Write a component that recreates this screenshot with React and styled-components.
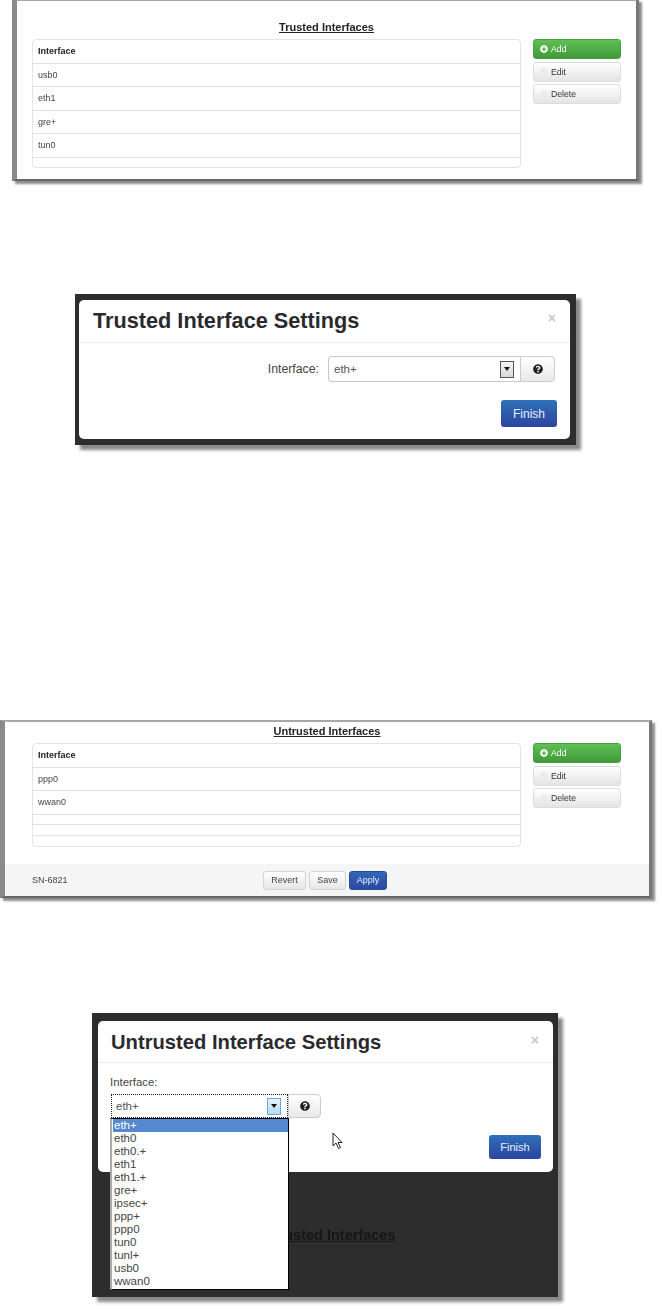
import React from "react";
import styled, { createGlobalStyle } from "styled-components";
import { FaPlusCircle, FaCheckCircle, FaMinusCircle, FaQuestionCircle } from "react-icons/fa";

const GlobalStyle = createGlobalStyle`
  html, body { margin: 0; padding: 0; background: #fff; }
  body { font-family: "Liberation Sans", Arial, sans-serif; color: #333; }
`;

const Page = styled.div`
  width: 662px;
  height: 1309px;
  overflow: hidden;
  display: flex;
  flex-direction: column;
  filter: blur(0.3px);
`;

const Window = styled.section`
  box-sizing: border-box;
  display: flex;
  flex-direction: column;
  background: #fff;
  margin: ${(p) => p.$margin};
  width: ${(p) => p.$width}px;
  height: ${(p) => p.$height}px;
  padding-top: ${(p) => p.$top}px;
  border-top: 2px solid #a8a8a8;
  border-left: ${(p) => p.$left}px solid #8c8a88;
  border-right: 3px solid #77777a;
  border-bottom: 2px solid #666;
  box-shadow: 3px 3px 2px #8d8d8d;
`;

const SectionTitle = styled.h2`
  margin: 0;
  font-size: 11px;
  line-height: 14px;
  font-weight: 700;
  text-align: center;
  text-decoration: underline;
  color: ${(p) => p.$color || "#222"};
`;

const Body = styled.div`
  display: flex;
  align-items: flex-start;
  gap: 12px;
  margin: ${(p) => p.$gap}px 0 0 ${(p) => p.$inset}px;
`;

const Table = styled.div`
  box-sizing: border-box;
  width: 489px;
  border: 1px solid #e4e4e4;
  border-radius: 4px;
  display: flex;
  flex-direction: column;
`;

const Row = styled.div`
  box-sizing: border-box;
  height: ${(p) => p.$height || 23.5}px;
  padding-left: 5px;
  display: flex;
  align-items: center;
  font-size: 9px;
  font-weight: ${(p) => (p.$head ? 700 : 400)};
  color: ${(p) => (p.$head ? "#222" : "#444")};
  border-bottom: ${(p) => (p.$last ? "none" : "1px solid #e2e2e2")};
`;

const Actions = styled.div`
  display: flex;
  flex-direction: column;
  gap: 2.5px;
  width: 88px;
`;

const ActionButton = styled.div`
  box-sizing: border-box;
  height: 20px;
  padding-left: 6px;
  display: flex;
  align-items: center;
  gap: 3px;
  font-size: 8.7px;
  border-radius: 3px;
  color: ${(p) => (p.$primary ? "#fff" : "#333")};
  background: ${(p) =>
    p.$primary ? "linear-gradient(#5fc052, #419a3b)" : "linear-gradient(#fff, #e4e4e4)"};
  border: 1px solid ${(p) => (p.$primary ? "#4a9e43" : "#ddd")};
  svg {
    width: 8px;
    height: 8px;
    color: ${(p) => (p.$primary ? "#fff" : "#eaeaea")};
  }
`;

const Footer = styled.div`
  margin-top: auto;
  height: 32px;
  background: #f5f5f5;
  display: flex;
  align-items: center;
  padding-left: ${(p) => p.$inset}px;
`;

const Serial = styled.span`
  width: 231px;
  font-size: 9px;
  color: #444;
`;

const FooterButton = styled.div`
  box-sizing: border-box;
  height: 19px;
  width: ${(p) => p.$width}px;
  margin-right: 3px;
  display: flex;
  align-items: center;
  justify-content: center;
  font-size: 9px;
  border-radius: 3px;
  color: ${(p) => (p.$primary ? "#e8eefc" : "#444")};
  background: ${(p) =>
    p.$primary ? "linear-gradient(#2f66b5, #2b4aa2)" : "linear-gradient(#fff, #e6e6e6)"};
  border: 1px solid ${(p) => (p.$primary ? "#2a4a9a" : "#d4d4d4")};
`;

const Frame = styled.section`
  box-sizing: border-box;
  position: relative;
  margin: ${(p) => p.$margin};
  width: ${(p) => p.$width}px;
  height: ${(p) => p.$height}px;
  padding: ${(p) => p.$padding};
  background: #2d2d2d;
  box-shadow: 5px 5px 3px #8a8a8a;
`;

const Modal = styled.div`
  box-sizing: border-box;
  height: ${(p) => p.$height}px;
  background: #fff;
  border-radius: 5px;
  display: flex;
  flex-direction: column;
`;

const ModalHead = styled.div`
  box-sizing: border-box;
  height: ${(p) => p.$height}px;
  padding: ${(p) => p.$pushDown || 0}px 14px 0 ${(p) => p.$inset}px;
  display: flex;
  align-items: center;
  justify-content: space-between;
  border-bottom: 1px solid #eee;
`;

const ModalTitle = styled.h1`
  margin: 0;
  font-size: ${(p) => p.$size}px;
  font-weight: 700;
  color: #2a2a2e;
`;

const Close = styled.span`
  font-size: 14px;
  font-weight: 700;
  color: #c8c8c8;
  margin-top: -6px;
`;

const FieldRow = styled.div`
  display: flex;
  align-items: center;
  justify-content: flex-end;
  margin: 13px 15px 0 0;
`;

const Label = styled.label`
  font-size: ${(p) => p.$size}px;
  color: #444;
  margin-right: ${(p) => p.$right || 0}px;
  margin-left: ${(p) => p.$left || 0}px;
  margin-top: ${(p) => p.$top || 0}px;
`;

const SelectBox = styled.div`
  box-sizing: border-box;
  width: ${(p) => p.$width}px;
  height: ${(p) => p.$height}px;
  padding: 0 6px 0 ${(p) => (p.$focus ? 4 : 5)}px;
  display: flex;
  align-items: center;
  justify-content: space-between;
  font-size: 11.5px;
  color: #555;
  background: #fff;
  border: 1px ${(p) => (p.$focus ? "dotted #222" : "solid #c8c8c8")};
  border-right: ${(p) => (p.$focus ? "1px dotted #222" : "none")};
  border-radius: ${(p) => (p.$focus ? "0" : "4px 0 0 4px")};
`;

const Arrow = styled.span`
  box-sizing: border-box;
  width: 14px;
  height: 17px;
  display: flex;
  align-items: center;
  justify-content: center;
  border: 1px solid ${(p) => (p.$hover ? "#6fa8d0" : "#555")};
  background: ${(p) => (p.$hover ? "linear-gradient(#e6f3fb, #b5dbf2)" : "linear-gradient(#f4f4f4, #d8d8d8)")};
  &::after {
    content: "";
    border: 3px solid transparent;
    border-top: 4px solid #111;
    border-bottom: none;
  }
`;

const HelpButton = styled.div`
  box-sizing: border-box;
  width: ${(p) => p.$width}px;
  height: ${(p) => p.$height}px;
  display: flex;
  align-items: center;
  justify-content: center;
  background: linear-gradient(#fff, #e8e8e8);
  border: 1px solid #ccc;
  border-radius: 0 4px 4px 0;
  svg {
    width: 10px;
    height: 10px;
    color: #222;
  }
`;

const FinishRow = styled.div`
  display: flex;
  justify-content: flex-end;
  margin: ${(p) => p.$top}px ${(p) => p.$right}px 0 0;
`;

const FinishButton = styled.div`
  box-sizing: border-box;
  width: ${(p) => p.$width}px;
  height: ${(p) => p.$height}px;
  display: flex;
  align-items: center;
  justify-content: center;
  font-size: ${(p) => p.$size}px;
  color: #e8eefc;
  border-radius: 3px;
  background: linear-gradient(#2f70b8, #2b45a0);
`;

const InlineField = styled.div`
  display: flex;
  margin: 6px 0 0 13px;
`;

const DropList = styled.ul`
  box-sizing: border-box;
  position: absolute;
  top: 105px;
  left: 18px;
  width: 179px;
  margin: 0;
  padding: 0 0 1px 2px;
  list-style: none;
  background: #fff;
  border: 1px solid #000;
  border-left: 2px solid #aaa;
  font-size: 11.5px;
  line-height: 13px;
  color: #444;
`;

const DropItem = styled.li`
  height: 13px;
  margin-left: ${(p) => (p.$selected ? "-1px" : "0")};
  padding-left: ${(p) => (p.$selected ? "1px" : "0")};
  background: ${(p) => (p.$selected ? "#5588cc" : "transparent")};
  color: ${(p) => (p.$selected ? "#fff" : "#444")};
`;

const Cursor = styled.svg`
  position: absolute;
  left: 240px;
  top: 119px;
`;

const BehindTitle = styled(SectionTitle)`
  position: absolute;
  top: 214px;
  left: 0;
  right: 0;
  font-size: 14.5px;
  line-height: 16px;
  color: #161616;
`;

const trusted = ["usb0", "eth1", "gre+", "tun0"];
const untrusted = ["ppp0", "wwan0"];
const options = ["eth+", "eth0", "eth0.+", "eth1", "eth1.+", "gre+", "ipsec+", "ppp+", "ppp0", "tun0", "tunl+", "usb0", "wwan0"];

function SideActions() {
  return (
    <Actions>
      <ActionButton $primary><FaPlusCircle /> Add</ActionButton>
      <ActionButton><FaCheckCircle /> Edit</ActionButton>
      <ActionButton><FaMinusCircle /> Delete</ActionButton>
    </Actions>
  );
}

export default function App() {
  return (
    <Page>
      <GlobalStyle />

      <Window $margin="-1px 0 0 12px" $width={627} $height={182} $left={5} $top={19}>
        <SectionTitle>Trusted Interfaces</SectionTitle>
        <Body $gap={5} $inset={15}>
          <Table>
            <Row $head>Interface</Row>
            {trusted.map((name) => <Row key={name}>{name}</Row>)}
            <Row $last $height={9} />
          </Table>
          <SideActions />
        </Body>
      </Window>

      <Frame $margin="113px 0 0 75px" $width={501} $height={151} $padding="6px 6px 6px 4px">
        <Modal $height={139}>
          <ModalHead $height={43} $inset={14}>
            <ModalTitle $size={21.7}>Trusted Interface Settings</ModalTitle>
            <Close>×</Close>
          </ModalHead>
          <FieldRow>
            <Label $size={12.3} $right={9}>Interface:</Label>
            <SelectBox $width={192} $height={26}>eth+<Arrow /></SelectBox>
            <HelpButton $width={35} $height={26}><FaQuestionCircle /></HelpButton>
          </FieldRow>
          <FinishRow $top={18} $right={13}>
            <FinishButton $width={56} $height={27} $size={12}>Finish</FinishButton>
          </FinishRow>
        </Modal>
      </Frame>

      <Window $margin="275px 0 0 0" $width={652} $height={178} $left={5} $top={2}>
        <SectionTitle>Untrusted Interfaces</SectionTitle>
        <Body $gap={5} $inset={27}>
          <Table>
            <Row $head>Interface</Row>
            {untrusted.map((name) => <Row key={name}>{name}</Row>)}
            <Row $height={10.5} />
            <Row $height={10.5} />
            <Row $last $height={10.5} />
          </Table>
          <SideActions />
        </Body>
        <Footer $inset={27}>
          <Serial>SN-6821</Serial>
          <FooterButton $width={43}>Revert</FooterButton>
          <FooterButton $width={37}>Save</FooterButton>
          <FooterButton $width={38} $primary>Apply</FooterButton>
        </Footer>
      </Window>

      <Frame $margin="115px 0 0 92px" $width={466} $height={284} $padding="8px 5px 0 6px">
        <Modal $height={151}>
          <ModalHead $height={42} $inset={13} $pushDown={2}>
            <ModalTitle $size={20.2}>Untrusted Interface Settings</ModalTitle>
            <Close>×</Close>
          </ModalHead>
          <Label $size={11.4} $left={12} $top={13}>Interface:</Label>
          <InlineField>
            <SelectBox $focus $width={177} $height={24}>eth+<Arrow $hover /></SelectBox>
            <HelpButton $width={33} $height={24}><FaQuestionCircle /></HelpButton>
          </InlineField>
          <FinishRow $top={17} $right={12}>
            <FinishButton $width={52} $height={24} $size={11}>Finish</FinishButton>
          </FinishRow>
        </Modal>
        <BehindTitle>Untrusted Interfaces</BehindTitle>
        <DropList>
          {options.map((o, i) => <DropItem key={o} $selected={i === 0}>{o}</DropItem>)}
        </DropList>
        <Cursor width="12" height="18" viewBox="0 0 12 18">
          <path d="M1 1 L1 14 L4 11 L6.5 16.5 L8.5 15.5 L6 10.5 L10 10.5 Z" fill="#fff" stroke="#222" strokeWidth="1" />
        </Cursor>
      </Frame>
    </Page>
  );
}
